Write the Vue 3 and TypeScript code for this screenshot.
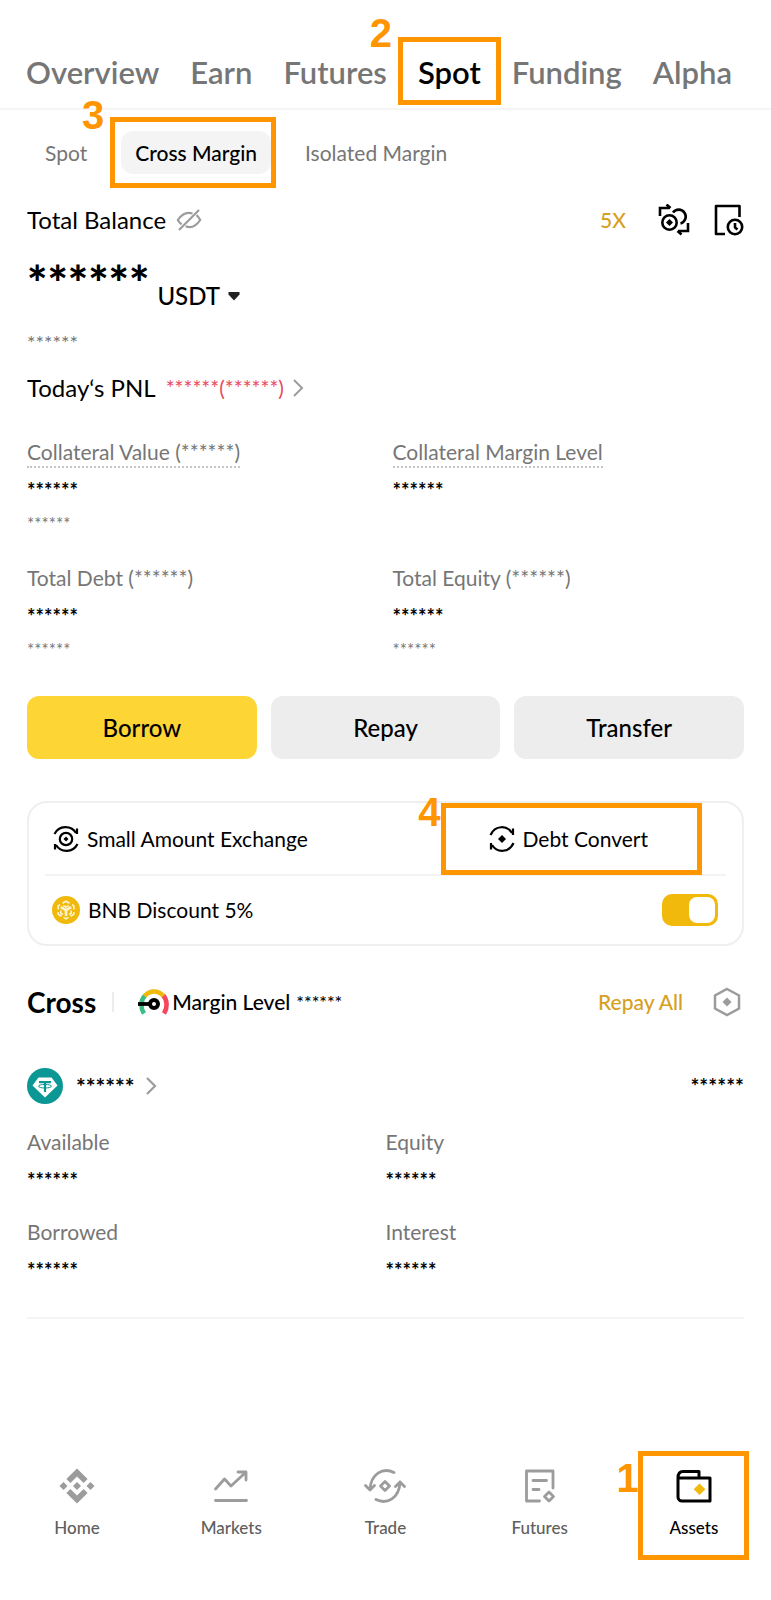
<script setup lang="ts">
import { ref } from 'vue'

interface Metric {
  label: string
  value: string
  sub?: string
  hint?: boolean
}

const mask = '******'

const accounts = ['Overview', 'Earn', 'Futures', 'Spot', 'Funding', 'Alpha']
const activeAccount = ref('Spot')

const modes = ['Spot', 'Cross Margin', 'Isolated Margin']
const activeMode = ref('Cross Margin')

const summary: Metric[] = [
  { label: `Collateral Value (${mask})`, value: mask, sub: mask, hint: true },
  { label: 'Collateral Margin Level', value: mask, hint: true },
  { label: `Total Debt (${mask})`, value: mask, sub: mask },
  { label: `Total Equity (${mask})`, value: mask, sub: mask },
]

const holdings: Metric[] = [
  { label: 'Available', value: mask },
  { label: 'Equity', value: mask },
  { label: 'Borrowed', value: mask },
  { label: 'Interest', value: mask },
]

const actions = ['Borrow', 'Repay', 'Transfer']
const discount = ref(true)

const nav = ['Home', 'Markets', 'Trade', 'Futures', 'Assets']
const activeNav = ref('Assets')
</script>

<template>
  <div class="page">
    <nav class="accounts" aria-label="Accounts">
      <button
        v-for="name in accounts"
        :key="name"
        type="button"
        class="account"
        :class="{ active: name === activeAccount }"
        @click="activeAccount = name"
      >
        {{ name }}
        <span v-if="name === 'Spot'" class="mark mark-two"><b class="step">2</b></span>
      </button>
    </nav>

    <main class="content">
      <div class="modes">
        <button
          v-for="name in modes"
          :key="name"
          type="button"
          class="mode"
          :class="{ active: name === activeMode }"
          @click="activeMode = name"
        >
          {{ name }}
          <span v-if="name === 'Cross Margin'" class="mark mark-three"><b class="step">3</b></span>
        </button>
      </div>

      <section class="balance">
        <div class="row balance-head">
          <h1 class="title">Total Balance</h1>
          <button type="button" class="icon-button" aria-label="Show balance">
            <svg width="26" height="24" viewBox="0 0 26 24" fill="none" stroke="#9c9c9c" stroke-width="2.200">
              <path d="M16.500 5.600C10.500 3.200 5.500 6.500 1.800 12c1 1.800 2.200 3.200 3.800 4.400M20.500 7.200c1.500 1.200 2.700 2.800 3.700 4.800-4 6-9 8.500-14.500 6.300M3 22 23 2" />
            </svg>
          </button>
          <span class="leverage">5X</span>
          <button type="button" class="icon-button" aria-label="Exchange">
            <svg width="32" height="32" viewBox="0 0 32 32" fill="none" stroke="#000" stroke-width="2.600">
              <path d="M2 12V4h10M8.500 0.500 12.500 4M30 19v8H20M23.500 30.500 19.500 27" />
              <circle cx="11.500" cy="18.500" r="7.200" />
              <path d="M15 8.600a7 7 0 1 1 7.500 10.800" />
              <path d="m11.500 15 3.500 3.500-3.500 3.500L8 18.500z" fill="#000" stroke="none" />
            </svg>
          </button>
          <button type="button" class="icon-button history" aria-label="History">
            <svg width="30" height="32" viewBox="0 0 30 32" fill="none" stroke="#000" stroke-width="2.600" stroke-linejoin="round">
              <path d="M11 30H2V2h23.500v11" />
              <circle cx="21" cy="23" r="7.200" />
              <path d="M21 19v4.500l2.500 2" />
            </svg>
          </button>
        </div>

        <div class="amount">
          <strong class="amount-value">{{ mask }}</strong>
          <button type="button" class="currency">
            USDT
            <svg width="12" height="10" viewBox="0 0 12 10"><path d="M.500 1h11v2.500L6 9.500 .500 3.500z" fill="#222" /></svg>
          </button>
        </div>
        <p class="fiat">{{ mask }}</p>

        <button type="button" class="row pnl">
          <span>Today‘s PNL</span>
          <span class="loss">{{ mask }}({{ mask }})</span>
          <svg width="12" height="18" viewBox="0 0 12 18" fill="none" stroke="#9c9c9c" stroke-width="2"><path d="m2 1 8 8-8 8" /></svg>
        </button>
      </section>

      <dl class="summary">
        <div v-for="item in summary" :key="item.label" class="metric">
          <dt><span :class="{ hint: item.hint }">{{ item.label }}</span></dt>
          <dd class="value">{{ item.value }}</dd>
          <dd v-if="item.sub" class="sub">{{ item.sub }}</dd>
        </div>
      </dl>

      <div class="actions">
        <button v-for="name in actions" :key="name" type="button" class="action" :class="{ primary: name === 'Borrow' }">
          {{ name }}
        </button>
      </div>

      <section class="card">
        <div class="tools">
          <button type="button" class="tool">
            <svg width="26" height="26" viewBox="0 0 26 26" fill="none" stroke="#000" stroke-width="2.200">
              <path d="M1.500 8C6-1 18-1 23 7M24 2.500V8M24.500 18C20 27 8 27 3 19M2 23.500V18" />
              <circle cx="13" cy="13" r="6.200" />
              <path d="m13 10.500 2.500 2.500-2.500 2.500-2.500-2.500z" fill="#000" stroke="none" />
            </svg>
            Small Amount Exchange
          </button>
          <button type="button" class="tool debt">
            <svg width="26" height="26" viewBox="0 0 26 26" fill="none" stroke="#000" stroke-width="2.200">
              <path d="M1.500 9C6-1 18-1 23 7M24 2.500V9M24.500 17C20 27 8 27 3 19M2 23.500V17" />
              <path d="m13 9 4 4-4 4-4-4z" fill="#000" stroke="none" />
            </svg>
            Debt Convert
            <span class="mark mark-four"><b class="step">4</b></span>
          </button>
        </div>
        <div class="discount">
          <svg width="28" height="28" viewBox="0 0 28 28" fill="none">
            <circle cx="14" cy="14" r="14" fill="#f0b90b" />
            <g stroke="#fff3cf" stroke-width="1.600">
              <path d="M10.500 7.200 14 5.200l3.500 2M20 8.800l1.800 1v3.700M6.200 13.500V9.800l1.800-1M6.200 16v2.300l3.300 1.900M21.800 16v2.300l-3.300 1.900M11.500 21.400 14 22.800l2.500-1.400" />
              <path d="M8.800 11.200 14 14.200l5.200-3M14 14.200V20" stroke-width="2.600" />
              <path d="M11.200 9.600 14 11l2.800-1.400M8.800 14.500v2.700l2.200 1.300M19.200 14.500v2.700L17 18.500" />
            </g>
          </svg>
          <label for="discount">BNB Discount 5%</label>
          <input id="discount" v-model="discount" type="checkbox" class="switch" />
        </div>
      </section>

      <section>
        <div class="row cross-head">
          <h2 class="cross-title">Cross</h2>
          <span class="bar"></span>
          <svg class="gauge" width="32" height="28" viewBox="0 0 32 28" fill="none" stroke-width="4.600">
            <path d="M6 25.500C2.500 20 2.200 12.500 7 7.500" stroke="#3dbd84" />
            <path d="M26 25.500C29.500 20 29.800 12.500 25 7" stroke="#f6465d" />
            <path d="M6.500 8C12 2 20 2 25.500 8" stroke="#f0b90b" />
            <path d="M0 16h11" stroke="#000" stroke-width="3.800" />
            <circle cx="16" cy="16" r="4" fill="#fff" stroke="#000" stroke-width="4" />
          </svg>
          <span class="level">Margin Level</span>
          <span class="level-mask">{{ mask }}</span>
          <button type="button" class="repay-all">Repay All</button>
          <button type="button" class="icon-button settings" aria-label="Settings">
            <svg width="28" height="30" viewBox="0 0 28 30">
              <path d="M14 2 26 8.500v13L14 28 2 21.500v-13z" fill="none" stroke="#9c9c9c" stroke-width="2.500" />
              <path d="m14 10.500 4.500 4.500-4.500 4.500L9.500 15z" fill="#9c9c9c" />
            </svg>
          </button>
        </div>

        <div class="row asset">
          <svg width="36" height="36" viewBox="0 0 36 36">
            <circle cx="18" cy="18" r="18" fill="#0b9793" />
            <path d="M11.500 9.500h13l6 8L18 29.500 5.500 17.500z" fill="#fff" />
            <path d="M12 14.200h12M18 14.200V24" stroke="#0b9793" stroke-width="2.200" fill="none" />
            <ellipse cx="18" cy="18.200" rx="6.500" ry="1.800" stroke="#0b9793" fill="none" />
          </svg>
          <button type="button" class="coin">
            <strong>{{ mask }}</strong>
            <svg width="12" height="20" viewBox="0 0 12 20" fill="none" stroke="#9c9c9c" stroke-width="2.200"><path d="m2 2 8 8-8 8" /></svg>
          </button>
          <strong class="coin-total">{{ mask }}</strong>
        </div>

        <dl class="holdings">
          <div v-for="item in holdings" :key="item.label" class="metric">
            <dt>{{ item.label }}</dt>
            <dd class="value">{{ item.value }}</dd>
          </div>
        </dl>
      </section>
    </main>

    <nav class="bottom" aria-label="Main">
      <button
        v-for="name in nav"
        :key="name"
        type="button"
        class="nav-item"
        :class="{ active: name === activeNav }"
        @click="activeNav = name"
      >
        <svg v-if="name === 'Home'" width="36" height="36" viewBox="0 0 36 36" fill="#9c9c9c">
          <path d="m18 .500 10.600 10.600-4 4L18 8.500l-6.600 6.600-4-4zM18 35.500 7.400 24.900l4-4L18 27.500l6.600-6.600 4 4zM.500 18l4-4 4 4-4 4zM14 18l4-4 4 4-4 4zM27.500 18l4-4 4 4-4 4z" />
        </svg>
        <svg v-else-if="name === 'Markets'" width="36" height="36" viewBox="0 0 36 36" fill="none" stroke="#9c9c9c" stroke-width="2.800" stroke-linecap="round" stroke-linejoin="round">
          <path d="M2.500 21 11.500 11l6.500 7L32 5M25 4h8v8M2.500 32.500h31" />
        </svg>
        <svg v-else-if="name === 'Trade'" width="42" height="36" viewBox="0 0 42 36" fill="none" stroke="#9c9c9c" stroke-width="2.800" stroke-linecap="round" stroke-linejoin="round">
          <path d="M30 4.500C19-1 6.500 6 6 22M1.500 17.500 6 22l4.500-4.500M12 31.500C23 37 35.500 30 36 14M31.500 18.500 36 14l4.500 4.500" />
          <path d="m21 13.500 4.500 4.500-4.500 4.500-4.500-4.500z" />
        </svg>
        <svg v-else-if="name === 'Futures'" width="36" height="36" viewBox="0 0 36 36" fill="none" stroke="#9c9c9c" stroke-width="2.800" stroke-linecap="round" stroke-linejoin="round">
          <path d="M17.500 33H4.500V3H31v17M11 12.500h13.500M11 21.500h6" />
          <path d="m27 24 4.500 4.500L27 33l-4.500-4.500z" />
        </svg>
        <svg v-else width="36" height="36" viewBox="0 0 36 36" fill="none" stroke="#000" stroke-width="3" stroke-linejoin="round">
          <path d="M2 10V29a4 4 0 0 0 4 4h28V10H2c0-4 1-6.500 5-6.500h16V10" />
          <path d="m23.500 15.500 5.800 5.800-5.800 5.800-5.800-5.800z" fill="#f0b90b" stroke="none" />
        </svg>
        {{ name }}
        <span v-if="name === 'Assets'" class="mark mark-one"><b class="step">1</b></span>
      </button>
    </nav>
  </div>
</template>

<style>
body {
  background: #fff;
}
</style>

<style scoped>
.page {
  display: flex;
  flex-direction: column;
  min-height: 100vh;
  box-sizing: border-box;
  padding-bottom: 60px;
  color: #000;
  font: 400 21px/28px Lato, "Liberation Sans", sans-serif;
}
button {
  position: relative;
  display: flex;
  align-items: center;
  margin: 0;
  padding: 0;
  border: 0;
  background: none;
  color: inherit;
  font: inherit;
  white-space: nowrap;
}
svg {
  flex: none;
  display: block;
}
h1, h2, p, dl, dd {
  margin: 0;
}
.row {
  display: flex;
  align-items: center;
}
.accounts {
  display: flex;
  justify-content: space-between;
  padding: 54px 39px 18px 26px;
  border-bottom: 2px solid #f5f5f5;
  color: #767676;
  font-size: 31px;
  font-weight: 600;
  line-height: 36px;
}
.active {
  color: #000;
}
.content {
  padding: 0 27px;
}
.modes {
  display: flex;
  gap: 20px;
  padding: 21px 4px;
  color: #767676;
}
.mode {
  height: 43px;
  padding: 0 14px;
  border-radius: 12px;
}
.mode.active {
  background: #f4f4f4;
  color: #000;
  font-weight: 500;
}
.mark {
  position: absolute;
  border: 5px solid #ff9500;
  z-index: 1;
}
.step {
  position: absolute;
  right: 100%;
  color: #ff9500;
  font: 700 40px/40px "Liberation Sans", sans-serif;
}
.mark-two {
  inset: -17px -20px -15px;
}
.mark-two .step {
  top: -29px;
  margin-right: 11px;
}
.mark-three {
  inset: -14px -5px -14px -11px;
}
.mark-three .step {
  top: -27px;
  margin-right: 11px;
}
.mark-four {
  inset: 0 -54px -1px -48px;
}
.mark-four .step {
  top: -16px;
  margin-right: 5px;
}
.mark-one {
  inset: -17px 22px -20px 21px;
}
.mark-one .step {
  top: 2px;
  margin-right: 4px;
}
.balance-head {
  height: 36px;
  margin-top: 7px;
}
.title {
  margin-right: 10px;
  font-size: 24px;
  font-weight: 400;
}
.leverage {
  margin: 0 32px 0 auto;
  color: #d6a01e;
  font-weight: 500;
}
.history {
  margin-left: 24px;
}
.amount {
  display: flex;
  align-items: flex-end;
  height: 56px;
  gap: 8px;
  margin-top: 16px;
}
.amount-value {
  align-self: flex-start;
  font-size: 48px;
  font-weight: 900;
  line-height: 58px;
}
.currency {
  gap: 8px;
  font-size: 24px;
  font-weight: 500;
}
.fiat {
  margin-top: 18px;
  color: #767676;
  font-size: 20px;
}
.pnl {
  margin-top: 18px;
  font-size: 24px;
}
.loss {
  margin: 0 8px 0 10px;
  color: #ea4a60;
  font-size: 21px;
}
.summary {
  display: grid;
  grid-template-columns: 1fr 1fr;
  column-gap: 14px;
  row-gap: 26px;
  margin-top: 36px;
}
.metric dt {
  height: 30px;
  margin-bottom: 8px;
  color: #767676;
}
.hint {
  display: inline-block;
  border-bottom: 2px dotted #c4c4c4;
}
.value {
  font-size: 20px;
  font-weight: 700;
}
.sub {
  margin-top: 6px;
  color: #767676;
  font-size: 17px;
}
.actions {
  display: grid;
  grid-template-columns: repeat(3, 1fr);
  gap: 14px;
  margin-top: 32px;
}
.action {
  justify-content: center;
  height: 63px;
  border-radius: 12px;
  background: #ededed;
  font-size: 24px;
  font-weight: 500;
}
.action.primary {
  background: #fdd535;
}
.card {
  margin-top: 42px;
  padding: 0 16px;
  border: 2px solid #efefef;
  border-radius: 20px;
}
.tools {
  display: flex;
  align-items: stretch;
  justify-content: space-between;
  height: 71px;
  padding: 0 78px 0 8px;
  border-bottom: 2px solid #f3f3f3;
}
.tool {
  gap: 8px;
}
.discount {
  display: flex;
  align-items: center;
  gap: 8px;
  height: 68px;
  padding: 0 8px 0 7px;
}
.switch {
  appearance: none;
  display: flex;
  justify-content: flex-end;
  width: 56px;
  height: 32px;
  margin: 0 0 0 auto;
  padding: 3px;
  box-sizing: border-box;
  border-radius: 10px;
  background: #f0b90b;
}
.switch:not(:checked) {
  justify-content: flex-start;
  background: #cfcfcf;
}
.switch::before {
  content: "";
  width: 26px;
  border-radius: 8px;
  background: #fff;
}
.cross-head {
  height: 36px;
  margin-top: 38px;
}
.cross-title {
  font-size: 28px;
  font-weight: 700;
}
.bar {
  width: 2px;
  height: 20px;
  margin: 0 24px 0 16px;
  background: #ececec;
}
.level {
  margin: 0 6px 0 2px;
  font-weight: 500;
}
.level-mask {
  font-size: 18px;
  font-weight: 500;
}
.repay-all {
  margin: 0 30px 0 auto;
  color: #d6a01e;
  font-weight: 500;
}
.settings {
  margin-right: 3px;
}
.asset {
  height: 36px;
  margin-top: 48px;
}
.coin {
  gap: 10px;
  margin-left: 13px;
  font-size: 23px;
}
.coin-total {
  margin-left: auto;
}
.holdings {
  display: grid;
  grid-template-columns: 1fr 1fr;
  row-gap: 24px;
  margin-top: 24px;
  padding-bottom: 33px;
  border-bottom: 2px solid #f5f5f5;
}
.bottom {
  display: grid;
  grid-template-columns: repeat(5, 1fr);
  margin-top: auto;
}
.nav-item {
  flex-direction: column;
  gap: 12px;
  color: #5e5e5e;
  font-size: 17px;
  font-weight: 500;
  line-height: 24px;
}
.nav-item.active {
  color: #000;
}
</style>
